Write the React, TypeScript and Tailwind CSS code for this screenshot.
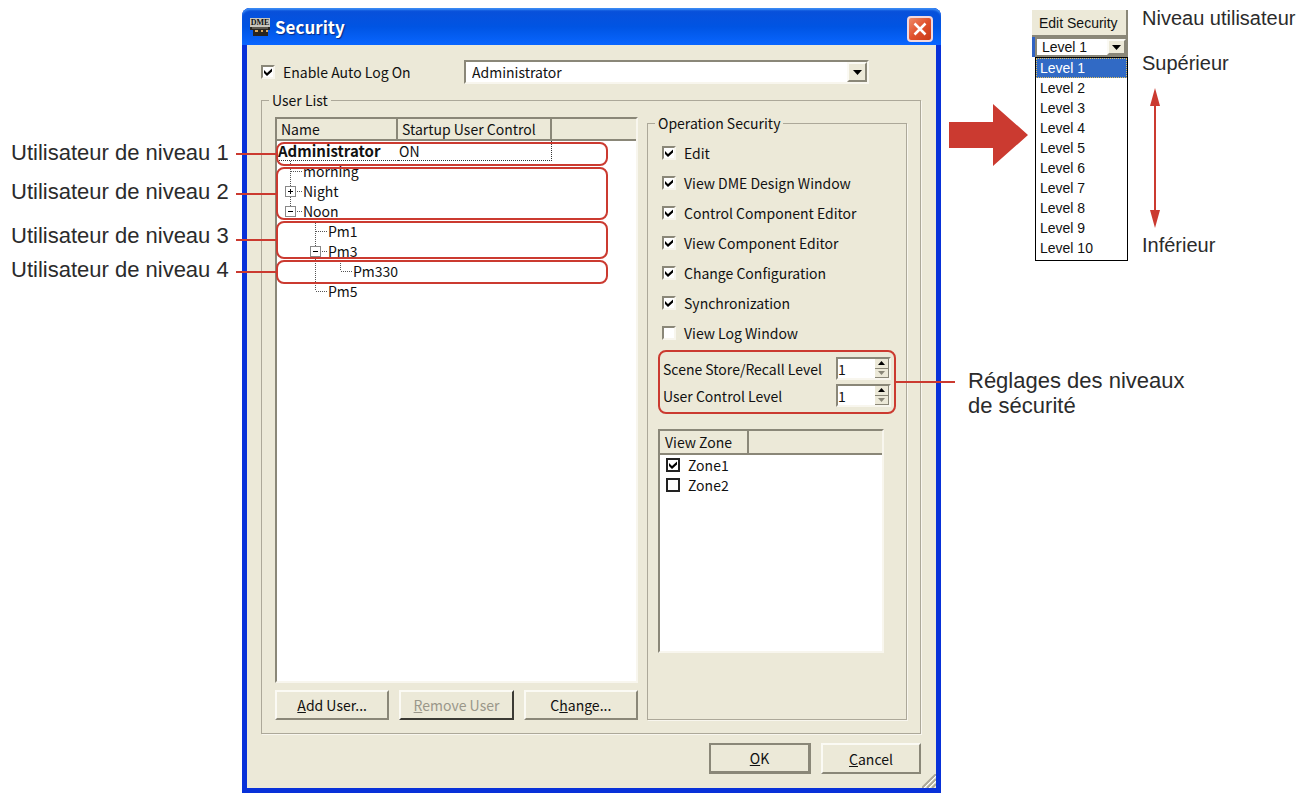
import { useState } from 'react';

type GuideKind = 'blank' | 'line' | 'tee' | 'end' | 'plus' | 'minus' | 'minusEnd';

interface UserRow {
  name: string;
  guides: GuideKind[];
  startup?: string;
}

const users: UserRow[] = [
  { name: 'Administrator', guides: [], startup: 'ON' },
  { name: 'morning', guides: ['tee'] },
  { name: 'Night', guides: ['plus'] },
  { name: 'Noon', guides: ['minusEnd'] },
  { name: 'Pm1', guides: ['blank', 'tee'] },
  { name: 'Pm3', guides: ['blank', 'minus'] },
  { name: 'Pm330', guides: ['blank', 'line', 'end'] },
  { name: 'Pm5', guides: ['blank', 'end'] },
];

const operations = [
  { label: 'Edit', checked: true },
  { label: 'View DME Design Window', checked: true },
  { label: 'Control Component Editor', checked: true },
  { label: 'View Component Editor', checked: true },
  { label: 'Change Configuration', checked: true },
  { label: 'Synchronization', checked: true },
  { label: 'View Log Window', checked: false },
];

const levels = [1, 2, 3, 4, 5, 6, 7, 8, 9, 10];

const sunken = 'border-2 border-t-[#8a8778] border-l-[#8a8778] border-r-[#f8f6ee] border-b-[#f8f6ee]';
const raised = 'border-2 border-t-[#fbfaf4] border-l-[#fbfaf4] border-r-[#8a8778] border-b-[#8a8778]';
const group = 'border border-[#aca899] shadow-[1px_1px_0_#f8f6ee]';

function CheckBox({ label, defaultChecked, flat }: { label: string; defaultChecked: boolean; flat?: boolean }) {
  return (
    <label className="flex items-center gap-2 leading-5">
      <span className="grid h-[14px] w-[14px] place-items-center">
        <input
          type="checkbox"
          defaultChecked={defaultChecked}
          className={`peer col-start-1 row-start-1 h-[14px] w-[14px] appearance-none bg-white ${
            flat ? 'border-2 border-[#222]' : sunken
          }`}
        />
        <svg
          viewBox="0 0 14 14"
          className="pointer-events-none invisible col-start-1 row-start-1 h-[14px] w-[14px] peer-checked:visible"
        >
          <path d="M3 5 L6 8 L11 3.500 V6.500 L6 11 L3 8 Z" fill="#000" />
        </svg>
      </span>
      {label}
    </label>
  );
}

function Guide({ kind }: { kind: GuideKind }) {
  const dots = { stroke: '#555', strokeDasharray: '1 1' };
  const box = kind === 'plus' || kind === 'minus' || kind === 'minusEnd';
  const stem = kind === 'end' || kind === 'minusEnd' ? 'M13.5 0V10' : 'M13.5 0V20';
  return (
    <svg viewBox="0 0 25 20" className="h-5 w-[25px] shrink-0" fill="none">
      {kind !== 'blank' && <path d={stem} {...dots} />}
      {kind !== 'blank' && kind !== 'line' && <path d="M14 10.500H25" {...dots} />}
      {box && <rect x="8.500" y="5.500" width="10" height="10" fill="#fff" stroke="#888" />}
      {box && <path d="M11 10.500H16" stroke="#000" />}
      {kind === 'plus' && <path d="M13.500 8V13" stroke="#000" />}
    </svg>
  );
}

function Callout({ className }: { className: string }) {
  return (
    <div className={`pointer-events-none absolute -left-px w-[332px] rounded-lg border-2 border-[#cb3a30] ${className}`}>
      <div className="absolute right-full top-1/2 h-[2px] w-[42px] -translate-y-1/2 bg-[#cb3a30]" />
    </div>
  );
}

function DropArrow({ className }: { className: string }) {
  return (
    <span className={`pointer-events-none flex items-center justify-center bg-[#ece9d8] ${raised} ${className}`}>
      <svg viewBox="0 0 9 5" className="h-[5px] w-[9px]">
        <path d="M0 0H9L4.500 5Z" fill="#000" />
      </svg>
    </span>
  );
}

function LevelField({ label, id }: { label: string; id: string }) {
  const [value, setValue] = useState(1);
  return (
    <div className="flex items-center justify-between">
      <label htmlFor={id}>{label}</label>
      <div className={`flex h-[23px] w-[55px] bg-white ${sunken}`}>
        <input
          id={id}
          value={value}
          onChange={(e) => setValue(Number(e.target.value) || 1)}
          className="w-0 min-w-0 flex-1 leading-5 outline-none"
        />
        <div className="flex w-[14px] flex-col">
          <button
            aria-label={`${label} up`}
            onClick={() => setValue(Math.min(10, value + 1))}
            className="flex flex-1 items-center justify-center border-b border-r border-[#8a8778] bg-[#ece9d8]"
          >
            <svg viewBox="0 0 7 4" className="h-1 w-[7px]">
              <path d="M3.500 0L7 4H0Z" fill="#000" />
            </svg>
          </button>
          <button
            aria-label={`${label} down`}
            onClick={() => setValue(Math.max(1, value - 1))}
            className="flex flex-1 items-center justify-center border-b border-r border-[#8a8778] bg-[#ece9d8]"
          >
            <svg viewBox="0 0 7 4" className="h-1 w-[7px]">
              <path d="M0 0H7L3.500 4Z" fill="#8a8778" />
            </svg>
          </button>
        </div>
      </div>
    </div>
  );
}

function TitleBar() {
  return (
    <header className="flex h-[37px] shrink-0 items-center gap-[5px] rounded-t-lg bg-linear-to-b from-[#0a4fd8] via-[#0054e3] to-[#0a66ff] px-2 shadow-[inset_0_3px_2px_-1px_#3c8cf5]">
      <svg viewBox="0 0 20 18" className="h-[18px] w-5">
        <rect width="20" height="9" fill="#c9c6bd" />
        <text x="10" y="7" textAnchor="middle" fontSize="8" fontWeight="700" fontFamily="Liberation Serif, serif" fill="#111">
          DME
        </text>
        <path d="M0 9H20V12H18V18H3V12H0Z" fill="#29251f" />
        <path d="M2 10H18" stroke="#8f8a80" />
        <path d="M5 13H8M11 13H13M16 13H18" stroke="#d6a860" strokeWidth="2" />
      </svg>
      <h1 className="flex-1 text-[17px] font-bold text-white [text-shadow:1px_1px_1px_#0a2a80]">Security</h1>
      <button
        aria-label="Close"
        className="mt-1 flex h-[26px] w-[26px] items-center justify-center rounded border-2 border-[#f4d8dc] bg-linear-to-br from-[#ee8a68] via-[#e0512c] to-[#c83a16]"
      >
        <svg viewBox="0 0 14 14" className="h-[14px] w-[14px]">
          <path d="M1.500 1.500L12.500 12.500M12.500 1.500L1.500 12.500" stroke="#fff" strokeWidth="2.500" />
        </svg>
      </button>
    </header>
  );
}

function UserList() {
  return (
    <div className={`relative mt-[3px] flex-1 bg-white ${sunken}`}>
      <table className="w-full table-fixed border-separate border-spacing-0 text-left">
        <thead>
          <tr className="h-[22px] bg-[#ece9d8]">
            <th className="w-[121px] border-b-2 border-r-2 border-[#8a8778] py-0 pl-1 font-normal">Name</th>
            <th className="w-[154px] whitespace-nowrap border-b-2 border-r-2 border-[#8a8778] py-0 pl-1 font-normal">
              Startup User Control
            </th>
            <th className="border-b-2 border-[#8a8778] p-0" />
          </tr>
        </thead>
        <tbody>
          {users.map((user) => (
            <tr key={user.name} className="h-5">
              <td className={`p-0 ${user.startup ? 'border-b border-dotted border-[#333]' : ''}`}>
                <div className={`flex items-center whitespace-nowrap ${user.startup ? 'h-[19px]' : 'h-5'}`}>
                  {user.guides.map((kind, i) => (
                    <Guide key={i} kind={kind} />
                  ))}
                  <span className={user.startup ? 'pl-px text-[15px] font-bold' : 'pl-px'}>{user.name}</span>
                </div>
              </td>
              <td className={`py-0 pl-px ${user.startup ? 'border-b border-r border-dotted border-[#333]' : ''}`}>{user.startup}</td>
              <td className="p-0" />
            </tr>
          ))}
        </tbody>
      </table>
      <Callout className="top-[23px] h-[24px]" />
      <Callout className="top-[48px] h-[53px]" />
      <Callout className="top-[102px] h-[38px]" />
      <Callout className="top-[141px] h-[24px]" />
    </div>
  );
}

function SecurityDialog() {
  return (
    <section className="mb-[2px] mt-2 flex min-w-0 flex-1 flex-col rounded-t-lg bg-[#0831d9] font-['Noto_Sans_CJK_JP',sans-serif] text-sm leading-[18px] text-[#111]">
      <TitleBar />
      <div className="mx-[5px] mb-[5px] flex flex-1 flex-col bg-[#ece9d8] pl-[14px] pr-[15px] pt-[15px]">
        <div className="flex items-center pr-[52px]">
          <div className="w-[203px]">
            <CheckBox label="Enable Auto Log On" defaultChecked />
          </div>
          <div className={`grid h-6 flex-1 items-center bg-white ${sunken}`}>
            <select
              aria-label="Auto log on user"
              className="col-start-1 row-start-1 h-5 w-full appearance-none pl-[6px] leading-5 outline-none"
            >
              <option>Administrator</option>
            </select>
            <DropArrow className="col-start-1 row-start-1 h-5 w-5 justify-self-end" />
          </div>
        </div>

        <fieldset className={`mt-[7px] flex flex-1 gap-[9px] px-[13px] pb-[13px] pt-[5px] ${group}`}>
          <legend className="-ml-[6px] px-[3px]">User List</legend>
          <div className="flex min-w-0 flex-1 flex-col">
            <UserList />
            <div className="mt-[7px] grid grid-cols-3 gap-[10px]">
              <button className={`h-[30px] ${raised}`}>
                <u>A</u>dd User...
              </button>
              <button
                disabled
                className="h-[30px] border-2 border-b-[#3b3a34] border-l-[#fbfaf4] border-r-[#3b3a34] border-t-[#fbfaf4] text-[#9a978a]"
              >
                <u>R</u>emove User
              </button>
              <button className={`h-[30px] ${raised}`}>
                C<u>h</u>ange...
              </button>
            </div>
          </div>

          <fieldset className={`flex w-[260px] shrink-0 flex-col px-[10px] pb-[66px] pt-[11px] ${group}`}>
            <legend className="-ml-[3px] px-[3px]">Operation Security</legend>
            <div className="flex flex-col gap-[10px] pl-1">
              {operations.map((op) => (
                <CheckBox key={op.label} label={op.label} defaultChecked={op.checked} />
              ))}
            </div>
            <div className="relative mt-[7px] flex flex-col gap-[4px] rounded-lg border-2 border-[#cb3a30] px-[3px] py-[5px]">
              <LevelField id="scene-level" label="Scene Store/Recall Level" />
              <LevelField id="user-level" label="User Control Level" />
              <div className="absolute left-full top-1/2 h-[2px] w-[61px] -translate-y-1/2 bg-[#cb3a30]" />
            </div>
            <div className={`mr-[12px] mt-[15px] flex flex-1 flex-col bg-white ${sunken}`}>
              <div className="flex h-6 border-b-2 border-[#8a8778] bg-[#ece9d8]">
                <div className="w-[89px] border-r-2 border-[#8a8778] pl-[5px] leading-[22px]">View Zone</div>
              </div>
              <div className="pl-[6px]">
                <CheckBox label="Zone1" defaultChecked flat />
                <CheckBox label="Zone2" defaultChecked={false} flat />
              </div>
            </div>
          </fieldset>
        </fieldset>

        <div className="flex justify-end gap-[10px] pb-[14px] pt-[9px]">
          <button className="h-[31px] w-[102px] border-2 border-b-[3px] border-r-[3px] border-[#8a8778]">
            <u>O</u>K
          </button>
          <button className={`h-[31px] w-[100px] ${raised}`}>
            <u>C</u>ancel
          </button>
        </div>
        <div className="-mr-[15px] -mt-[14px] flex h-[14px] justify-end">
          <svg viewBox="0 0 14 14" className="h-[14px] w-[14px]">
            <path d="M0 14L14 0M5 14L14 5M10 14L14 10" stroke="#aca899" strokeWidth="2" />
            <path d="M2 14L14 2M7 14L14 7" stroke="#fff" />
          </svg>
        </div>
      </div>
    </section>
  );
}

function LevelPicker() {
  return (
    <div className="w-[96px] font-['Liberation_Sans',sans-serif] text-sm text-[#111]">
      <div className="h-[27px] whitespace-nowrap border-b-2 border-r-2 border-[#8a8778] bg-[#ece9d8] pl-[7px] leading-[26px]">
        Edit Security
      </div>
      <div className="border-l-[3px] border-[#2f62c4]">
        <div className="grid h-5 items-center border-2 border-[#8a8778] bg-white">
          <select aria-label="Edit Security" className="col-start-1 row-start-1 h-4 w-full appearance-none pl-[5px] leading-4 outline-none">
            {levels.map((n) => (
              <option key={n}>Level {n}</option>
            ))}
          </select>
          <DropArrow className="col-start-1 row-start-1 h-4 w-[19px] justify-self-end" />
        </div>
      </div>
      <ul role="listbox" aria-label="Levels" className="ml-[3px] border border-black bg-white pb-[2px]">
        {levels.map((n) => (
          <li
            key={n}
            role="option"
            aria-selected={n === 1}
            className={`h-5 pl-1 leading-5 ${n === 1 ? 'bg-[#316ac5] text-white outline-1 -outline-offset-1 outline-dotted outline-[#e0c060]' : ''}`}
          >
            Level {n}
          </li>
        ))}
      </ul>
    </div>
  );
}

export default function App() {
  return (
    <main className="flex min-h-screen bg-white font-['Liberation_Sans',sans-serif] text-[#2b2b2b]">
      <aside className="w-[242px] shrink-0 whitespace-nowrap pl-[11px] pt-[141px] text-[22px] leading-6">
        <p>Utilisateur de niveau 1</p>
        <p className="mt-[15px]">Utilisateur de niveau 2</p>
        <p className="mt-5">Utilisateur de niveau 3</p>
        <p className="mt-[10px]">Utilisateur de niveau 4</p>
      </aside>

      <SecurityDialog />

      <aside className="w-[359px] shrink-0 pl-2">
        <div className="flex pt-[6px]">
          <svg viewBox="0 0 79 62" className="mt-[98px] h-[62px] w-[79px] shrink-0">
            <path d="M0 18H44V0L79 31L44 62V44H0Z" fill="#cb3a30" />
          </svg>
          <div className="ml-1 mt-1">
            <LevelPicker />
          </div>
          <div className="ml-[14px] flex flex-col whitespace-nowrap text-[20px] leading-6">
            <p>Niveau utilisateur</p>
            <p className="mt-[21px]">Supérieur</p>
            <svg viewBox="0 0 10 140" className="ml-2 mt-[13px] h-[140px] w-[10px]">
              <path d="M5 0L10 18H6V122H10L5 140L0 122H4V18H0Z" fill="#cb3a30" />
            </svg>
            <p className="mt-[5px]">Inférieur</p>
          </div>
        </div>
        <p className="mt-[107px] pl-[19px] text-[22px] leading-[25px]">
          Réglages des niveaux
          <br />
          de sécurité
        </p>
      </aside>
    </main>
  );
}
